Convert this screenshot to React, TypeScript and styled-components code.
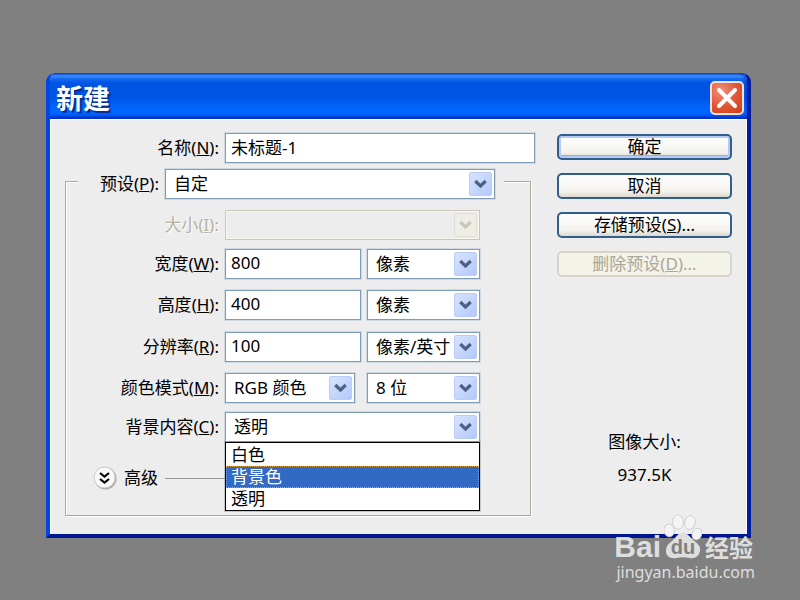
import React from 'react';
import styled, { createGlobalStyle, css } from 'styled-components';

const GlobalStyle = createGlobalStyle`
  * { box-sizing: border-box; }
  body {
    margin: 0;
    background: #808080;
    color: #000;
    font: 17px/22px "Noto Sans", "Noto Sans CJK SC", sans-serif;
  }
  button, input, select { font: inherit; color: inherit; margin: 0; }
`;

const Page = styled.main`
  position: relative;
  min-height: 100vh;
  padding: 73px 49px 0 46px;
`;

const Dialog = styled.section`
  background: #ededed;
  border: solid #0831d9;
  border-width: 0 4px 4px;
  border-color: #0831d9 #001ea0 #001590 #0046e0;
  border-radius: 9px 9px 0 0;
  overflow: hidden;
`;

const TitleBar = styled.header`
  display: flex;
  align-items: center;
  justify-content: space-between;
  height: 46px;
  margin: 0 -4px;
  padding: 3px 7px 0 10px;
  border-radius: 9px 9px 0 0;
  background: linear-gradient(
    #1058d8 0, #3c8cfc 3px, #1468f0 6px, #0054e3 10px, #0054e3 24px,
    #0066ff 36px, #0066ff 41px, #0040d8 44px, #0030c0 46px
  );
  box-shadow: inset 2px 0 2px #0040c8, inset -4px 0 3px #0028b8;
`;

const Title = styled.h1`
  margin: 0;
  color: #fff;
  font: bold 27px/36px "Noto Sans CJK SC", sans-serif;
  text-shadow: 2px 2px 1px #0a2a90;
`;

const CloseButton = styled.button`
  display: grid;
  place-items: center;
  width: 34px;
  height: 34px;
  padding: 0;
  border: 2px solid #f4e0dc;
  border-radius: 5px;
  background: radial-gradient(circle at 30% 25%, #ee9078, #e2583a 50%, #cc3c10);
`;

const Body = styled.form`
  display: grid;
  grid-template-columns: 1fr 175px;
  column-gap: 22px;
  padding: 13px 14px 18px;
  border: 1px solid #fff;
  border-width: 1px 1px 0;
`;

const Row = styled.div<{ $labelWidth: number; $gap?: number }>`
  display: grid;
  grid-template-columns: ${p => p.$labelWidth}px 1fr;
  column-gap: 6px;
  align-items: center;
  margin-top: ${p => p.$gap ?? 0}px;
`;

const Label = styled.label<{ $disabled?: boolean }>`
  text-align: right;
  white-space: nowrap;
  ${p => p.$disabled && css`color: #b5b2a2; text-shadow: 1px 1px 0 #fff;`}
`;

const fieldFrame = css`
  width: 100%;
  min-width: 0;
  height: 30px;
  border: 1px solid #7f9db9;
  border-radius: 0;
  background: #fff;
  box-shadow: 0 0 0 1px #cfd9e2;
  outline: 0;
`;

const TextInput = styled.input`
  ${fieldFrame}
  padding: 0 5px 4px;
`;

const FieldPair = styled.div`
  display: grid;
  grid-template-columns: 1fr 113px;
  column-gap: 6px;
`;

const SelectBox = styled.div<{ $inset?: boolean }>`
  display: grid;
  position: relative;
  min-width: 0;
  margin-right: ${p => (p.$inset ? 6 : 0)}px;
  > select, > svg { grid-area: 1 / 1; }
  > svg { align-self: center; justify-self: end; margin-right: 3px; pointer-events: none; }
`;

const NativeSelect = styled.select`
  ${fieldFrame}
  appearance: none;
  padding: 0 0 0 8px;
  &:disabled {
    border-color: #c9c7ba;
    background: #ededed;
    box-shadow: inset 0 0 0 1px #f8f7ee;
    opacity: 1;
  }
`;

const Group = styled.fieldset`
  min-width: 0;
  margin: 6px 4px 0 0;
  padding: 0 26px 25px 12px;
  border: 1px solid #aca899;
  box-shadow: 1px 1px 0 #fff, inset 1px 1px 0 #fff;
`;

const PresetLegend = styled.legend`
  display: grid;
  grid-template-columns: 81px 1fr;
  column-gap: 6px;
  align-items: center;
  width: 100%;
  height: 24px;
  padding: 0 9px 0 0;
  background: #ededed;
  grid-auto-rows: 30px;
`;

const Settings = styled.div`
  padding: 17px 24px 0 0;
`;

const OptionList = styled.ul`
  position: absolute;
  z-index: 1;
  top: 30px;
  left: 0;
  right: 0;
  margin: 0;
  padding: 1px 0 0;
  border: 1px solid #000;
  box-shadow: 0 0 0 1px #88888866;
  background: #fff;
  list-style: none;
`;

const Option = styled.li<{ $active?: boolean }>`
  height: 22px;
  padding: 0 5px;
  ${p => p.$active && css`
    color: #fff;
    background: #316ac5;
    outline: 1px dotted #e0a040;
    outline-offset: -1px;
  `}
`;

const Advanced = styled.div`
  display: flex;
  align-items: center;
  gap: 7px;
  margin: 24px 0 0 15px;
  &::after { content: ''; flex: 1; height: 1px; background: #999; }
`;

const Disclosure = styled.button`
  display: flex;
  align-items: center;
  gap: 7px;
  padding: 0;
  border: 0;
  background: none;
`;

const Side = styled.aside`
  display: flex;
  flex-direction: column;
  gap: 13px;
  padding-top: 1px;
`;

const PushButton = styled.button<{ $primary?: boolean }>`
  height: 26px;
  padding: 0;
  border: 2px solid #2f5f8a;
  border-radius: 5px;
  line-height: 22px;
  background: linear-gradient(#fff, #f3f2ec 75%, #dcd8ce);
  box-shadow: ${p => (p.$primary ? 'inset 0 0 0 2px #b4caf2, inset 0 -2px 0 1px #93aee6' : 'none')};
  &:disabled {
    color: #aaa797;
    border-color: #d6d4c8;
    background: #f4f3ea;
  }
`;

const ImageSize = styled.div`
  display: flex;
  flex-direction: column;
  gap: 11px;
  margin-top: 141px;
  text-align: center;
`;

const Watermark = styled.div`
  position: absolute;
  right: 45px;
  bottom: 18px;
  color: #dedede;
  text-align: right;
  pointer-events: none;
`;

const Brand = styled.div`
  display: flex;
  align-items: flex-end;
  gap: 3px;
  margin-right: 2px;
  font: bold 30px/30px "Liberation Sans", sans-serif;
  > svg { margin-bottom: 3px; }
`;

const BrandSuffix = styled.span`
  font: bold 24px/30px "Noto Sans CJK SC", sans-serif;
`;

const Site = styled.div`
  font: 16px/20px "Noto Sans", sans-serif;
`;

function ArrowGlyph({ disabled }: { disabled?: boolean }) {
  return (
    <svg width="23" height="24" viewBox="0 0 23 24" aria-hidden="true">
      <defs>
        <linearGradient id="arrowFace" x1="0" y1="0" x2="1" y2="1">
          <stop offset="0" stopColor="#d9e4fe" />
          <stop offset="1" stopColor="#b2c8fa" />
        </linearGradient>
      </defs>
      <rect x="0.5" y="0.5" width="22" height="23" rx="1.5"
        fill={disabled ? '#efeee6' : 'url(#arrowFace)'} stroke={disabled ? '#e0dfd3' : '#bccdf5'} />
      <path d="M6.3 9 11.5 14 16.7 9" fill="none" stroke={disabled ? '#c9c7ba' : '#4d6185'} strokeWidth="3.2" />
    </svg>
  );
}

type SelectProps = { id: string; value?: string; disabled?: boolean; inset?: boolean; label?: string; children?: React.ReactNode };

function Select({ id, value, disabled, inset, label, children }: SelectProps) {
  return (
    <SelectBox $inset={inset}>
      <NativeSelect id={id} disabled={disabled} aria-label={label}>
        {value && <option>{value}</option>}
      </NativeSelect>
      <ArrowGlyph disabled={disabled} />
      {children}
    </SelectBox>
  );
}

function Caption({ text, hotkey, id, disabled }: { text: string; hotkey: string; id: string; disabled?: boolean }) {
  return <Label htmlFor={id} $disabled={disabled}>{text}(<u>{hotkey}</u>):</Label>;
}

const measures = [
  { id: 'width', text: '宽度', hotkey: 'W', value: '800', unit: '像素', gap: 9 },
  { id: 'height', text: '高度', hotkey: 'H', value: '400', unit: '像素', gap: 11 },
  { id: 'resolution', text: '分辨率', hotkey: 'R', value: '100', unit: '像素/英寸', gap: 12 },
];

export default function App() {
  return (
    <Page>
      <GlobalStyle />
      <Dialog role="dialog" aria-labelledby="title">
        <TitleBar>
          <Title id="title">新建</Title>
          <CloseButton type="button" aria-label="关闭">
            <svg width="24" height="24" viewBox="0 0 24 24" aria-hidden="true">
              <path d="M4 4 20 20M20 4 4 20" stroke="#fff" strokeWidth="4" strokeLinecap="round" />
            </svg>
          </CloseButton>
        </TitleBar>
        <Body onSubmit={e => e.preventDefault()}>
          <div>
            <Row $labelWidth={154}>
              <Caption id="name" text="名称" hotkey="N" />
              <TextInput id="name" defaultValue="未标题-1" />
            </Row>
            <Group>
              <PresetLegend>
                <Caption id="preset" text="预设" hotkey="P" />
                <Select id="preset" value="自定" />
              </PresetLegend>
              <Settings>
                <Row $labelWidth={141}>
                  <Caption id="size" text="大小" hotkey="I" disabled />
                  <Select id="size" disabled />
                </Row>
                {measures.map(m => (
                  <Row key={m.id} $labelWidth={141} $gap={m.gap}>
                    <Caption id={m.id} text={m.text} hotkey={m.hotkey} />
                    <FieldPair>
                      <TextInput id={m.id} defaultValue={m.value} />
                      <Select id={`${m.id}-unit`} value={m.unit} label={`${m.text}单位`} />
                    </FieldPair>
                  </Row>
                ))}
                <Row $labelWidth={141} $gap={11}>
                  <Caption id="mode" text="颜色模式" hotkey="M" />
                  <FieldPair>
                    <Select id="mode" value="RGB 颜色" inset />
                    <Select id="depth" value="8 位" label="位深度" />
                  </FieldPair>
                </Row>
                <Row $labelWidth={141} $gap={9}>
                  <Caption id="background" text="背景内容" hotkey="C" />
                  <Select id="background" value="透明">
                    <OptionList role="listbox" aria-label="背景内容">
                      <Option role="option" aria-selected="false">白色</Option>
                      <Option role="option" aria-selected="true" $active>背景色</Option>
                      <Option role="option" aria-selected="false">透明</Option>
                    </OptionList>
                  </Select>
                </Row>
                <Advanced>
                  <Disclosure type="button">
                    <svg width="24" height="24" viewBox="0 0 24 24" aria-hidden="true">
                      <circle cx="12.5" cy="12.5" r="11" fill="#aaa" />
                      <circle cx="11.5" cy="11.5" r="10.5" fill="#f8f8f8" stroke="#ccc" />
                      <path d="M7 7 11.5 10.5 16 7M7 13 11.5 16.5 16 13" fill="none" stroke="#000" strokeWidth="2.2" />
                    </svg>
                    高级
                  </Disclosure>
                </Advanced>
              </Settings>
            </Group>
          </div>
          <Side>
            <PushButton type="submit" $primary>确定</PushButton>
            <PushButton type="button">取消</PushButton>
            <PushButton type="button">存储预设(<u>S</u>)...</PushButton>
            <PushButton type="button" disabled>删除预设(<u>D</u>)...</PushButton>
            <ImageSize>
              <span>图像大小:</span>
              <span>937.5K</span>
            </ImageSize>
          </Side>
        </Body>
      </Dialog>
      <Watermark>
        <Brand>
          <span>Bai</span>
          <svg width="38" height="45" viewBox="2 0 38 45" aria-hidden="true">
            <g fill="#f4f4f4" stroke="#c8c8c8" strokeWidth="0.8">
              <ellipse cx="7" cy="16.5" rx="5.2" ry="6.4" transform="rotate(-8 7 16)" />
              <ellipse cx="16" cy="8" rx="5.4" ry="7.2" />
              <ellipse cx="28" cy="8.5" rx="5.2" ry="7" transform="rotate(12 28 8)" />
              <ellipse cx="35" cy="20" rx="4.8" ry="6" transform="rotate(25 35 20)" />
            </g>
            <path d="M21 19C26 19 28 23 31 26C35 29 39 32 38 37C37 42 33 45 28 44C23 43 19 43 14 44C8 45 4 42 4 37C4 31 8 29 12 25C15 22 16 19 21 19Z" fill="#dedede" />
            <text x="21" y="40" textAnchor="middle" fill="#808080" fontFamily="Liberation Sans" fontWeight="bold" fontSize="20">du</text>
          </svg>
          <BrandSuffix>经验</BrandSuffix>
        </Brand>
        <Site>jingyan.baidu.com</Site>
      </Watermark>
    </Page>
  );
}
